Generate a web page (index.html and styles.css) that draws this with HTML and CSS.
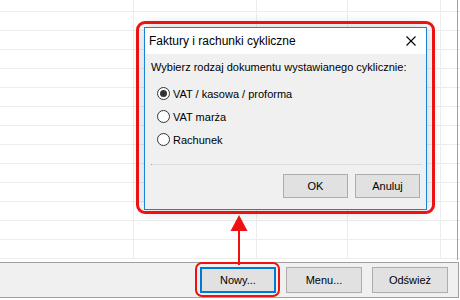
FILE: index.html
```html
<!DOCTYPE html>
<html lang="pl">
<head>
    <meta charset="UTF-8">
    <title>Faktury i rachunki cykliczne</title>
    <link rel="stylesheet" href="styles.css">
</head>
<body>
    <div class="window">
        <div class="sheet">
            <div class="col c1"></div>
            <div class="col c2"></div>
            <div class="col c3"></div>
            <div class="col c4"></div>
            <div class="col c5"></div>
        </div>

        <div class="toolbar">
            <button class="btn active">Nowy...</button>
            <button class="btn">Menu...</button>
            <button class="btn">Odśwież</button>
        </div>

        <!-- okno dialogowe -->
        <div class="dialog">
            <div class="titlebar">
                <span class="title">Faktury i rachunki cykliczne</span>
                <svg class="close" width="10" height="10" viewBox="0 0 10 10">
                    <path d="M0.5 0.5 L9.5 9.5 M9.5 0.5 L0.5 9.5" stroke="#000" stroke-width="1.1" fill="none"/>
                </svg>
            </div>
            <div class="dialog-body">
                <p class="question">Wybierz rodzaj dokumentu wystawianego cyklicznie:</p>
                <div class="options">
                    <label class="option"><span class="radio checked"></span>VAT / kasowa / proforma</label>
                    <label class="option"><span class="radio"></span>VAT marża</label>
                    <label class="option"><span class="radio"></span>Rachunek</label>
                </div>
                <div class="separator"></div>
                <div class="dialog-buttons">
                    <button class="btn small">OK</button>
                    <button class="btn small">Anuluj</button>
                </div>
            </div>
        </div>

        <!-- oznaczenia -->
        <div class="mark mark-dialog"></div>
        <div class="mark mark-button"></div>
        <svg class="arrow" width="20" height="50" viewBox="0 0 20 50">
            <polygon points="10,0 1.5,16 18.5,16" fill="#ee1111"/>
            <rect x="9" y="14" width="2" height="36" fill="#ee1111"/>
        </svg>
    </div>
</body>
</html>
```

FILE: styles.css
```css
body {
    margin: 0;
    font-family: 'Liberation Sans', Arial, sans-serif;
    font-size: 11px;
    color: #000;
    background: #fff;
}
.window {
    position: relative;
    width: 460px;
    height: 300px;
    overflow: hidden;
}
.sheet {
    display: flex;
    height: 260px;
    margin-bottom: 2px;
    background-image: linear-gradient(to bottom, #ededed 1px, transparent 1px);
    background-size: 100% 19px;
    background-position: 0 11px;
    background-repeat: repeat-y;
}
.sheet::after {
    content: "";
    width: 1px;
    background: #a0a0a0;
}
.col {
    border-right: 1px solid #ededed;
    height: 259px;
}
.c1 { width: 133px; }
.c2 { width: 122px; }
.c3 { width: 90px; }
.c4 { width: 92px; }
.c5 { width: 16px; border-right: none; }

.toolbar {
    display: flex;
    justify-content: flex-end;
    gap: 10px;
    height: 36px;
    box-sizing: border-box;
    padding: 4px 10px 0 0;
    background: #f0f0f0;
    border-top: 1px solid #a0a0a0;
    border-bottom: 1px solid #a0a0a0;
    border-right: 1px solid #a0a0a0;
    width: 459px;
}
.btn {
    font-family: 'Liberation Sans', Arial, sans-serif;
    font-size: 11px;
    color: #000;
    width: 76px;
    height: 26px;
    padding: 0;
    background: #e1e1e1;
    border: 1px solid #adadad;
}
.btn.active {
    border: 2px solid #0078d7;
}
.btn.small {
    width: 65px;
    height: 24px;
}

.dialog {
    position: absolute;
    left: 144px;
    top: 27px;
    width: 283px;
    height: 183px;
    box-sizing: border-box;
    border: 1px solid #1883d7;
    background: #f0f0f0;
    box-shadow: 0 0 14px rgba(0, 0, 0, 0.22);
}
.titlebar {
    display: flex;
    align-items: center;
    justify-content: space-between;
    height: 26px;
    padding: 0 10px 0 4px;
    background: #fff;
}
.title {
    font-size: 12px;
}
.dialog-body {
    padding: 6px 4px 0 6px;
}
.question {
    margin: 0;
    line-height: 14px;
}
.options {
    display: flex;
    flex-direction: column;
    gap: 10px;
    margin: 13px 0 0 6px;
}
.option {
    display: flex;
    align-items: center;
    gap: 3px;
    height: 13px;
}
.radio {
    width: 13px;
    height: 13px;
    box-sizing: border-box;
    border: 1px solid #333;
    border-radius: 50%;
    background: #fff;
    display: flex;
    align-items: center;
    justify-content: center;
}
.radio.checked::after {
    content: "";
    width: 7px;
    height: 7px;
    border-radius: 50%;
    background: #333;
}
.separator {
    height: 1px;
    margin: 18px 0 0 0;
    background: #dcdcdc;
    border-left: 1px solid #a0a0a0;
}
.dialog-buttons {
    display: flex;
    justify-content: flex-end;
    gap: 7px;
    margin-top: 9px;
    padding-right: 2px;
}

.mark {
    position: absolute;
    border: 3px solid #ee1111;
    border-radius: 9px;
}
.mark-dialog {
    left: 136px;
    top: 21px;
    width: 293px;
    height: 187px;
}
.mark-button {
    left: 195px;
    top: 262px;
    width: 81px;
    height: 31px;
    border-width: 2px;
    border-radius: 7px;
}
.arrow {
    position: absolute;
    left: 229px;
    top: 215px;
}
```
